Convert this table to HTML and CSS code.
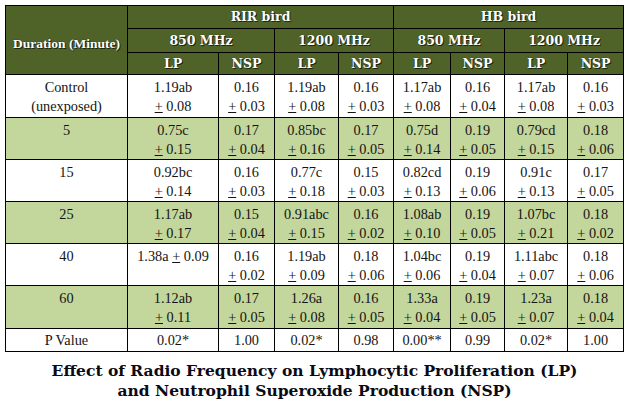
FILE: index.html
```html
<!DOCTYPE html>
<html>
<head>
<meta charset="utf-8">
<link rel="stylesheet" href="styles.css">
</head>
<body>
<div class="page">
<table class="data">
  <colgroup>
    <col class="c0"><col class="c1"><col class="c2"><col class="c3"><col class="c4"><col class="c5"><col class="c6"><col class="c7"><col class="c8">
  </colgroup>
  <thead>
    <tr class="hr1">
      <th rowspan="3" class="dur">Duration (Minute)</th>
      <th colspan="4">RIR bird</th>
      <th colspan="4">HB bird</th>
    </tr>
    <tr class="hr2">
      <th colspan="2">850 MHz</th>
      <th colspan="2">1200 MHz</th>
      <th colspan="2">850 MHz</th>
      <th colspan="2">1200 MHz</th>
    </tr>
    <tr class="hr3">
      <th>LP</th><th>NSP</th><th>LP</th><th>NSP</th><th>LP</th><th>NSP</th><th>LP</th><th>NSP</th>
    </tr>
  </thead>
  <tbody>
    <tr class="r w ra">
      <td>Control<br>(unexposed)</td>
      <td>1.19ab<br><u>+</u> 0.08</td><td>0.16<br><u>+</u> 0.03</td>
      <td>1.19ab<br><u>+</u> 0.08</td><td>0.16<br><u>+</u> 0.03</td>
      <td>1.17ab<br><u>+</u> 0.08</td><td>0.16<br><u>+</u> 0.04</td>
      <td>1.17ab<br><u>+</u> 0.08</td><td>0.16<br><u>+</u> 0.03</td>
    </tr>
    <tr class="r g rb">
      <td>5</td>
      <td>0.75c<br><u>+</u> 0.15</td><td>0.17<br><u>+</u> 0.04</td>
      <td>0.85bc<br><u>+</u> 0.16</td><td>0.17<br><u>+</u> 0.05</td>
      <td>0.75d<br><u>+</u> 0.14</td><td>0.19<br><u>+</u> 0.05</td>
      <td>0.79cd<br><u>+</u> 0.15</td><td>0.18<br><u>+</u> 0.06</td>
    </tr>
    <tr class="r w rb">
      <td>15</td>
      <td>0.92bc<br><u>+</u> 0.14</td><td>0.16<br><u>+</u> 0.03</td>
      <td>0.77c<br><u>+</u> 0.18</td><td>0.15<br><u>+</u> 0.03</td>
      <td>0.82cd<br><u>+</u> 0.13</td><td>0.19<br><u>+</u> 0.06</td>
      <td>0.91c<br><u>+</u> 0.13</td><td>0.17<br><u>+</u> 0.05</td>
    </tr>
    <tr class="r g rc">
      <td>25</td>
      <td>1.17ab<br><u>+</u> 0.17</td><td>0.15<br><u>+</u> 0.04</td>
      <td>0.91abc<br><u>+</u> 0.15</td><td>0.16<br><u>+</u> 0.02</td>
      <td>1.08ab<br><u>+</u> 0.10</td><td>0.19<br><u>+</u> 0.05</td>
      <td>1.07bc<br><u>+</u> 0.21</td><td>0.18<br><u>+</u> 0.02</td>
    </tr>
    <tr class="r w rb">
      <td>40</td>
      <td>1.38a <u>+</u> 0.09</td><td>0.16<br><u>+</u> 0.02</td>
      <td>1.19ab<br><u>+</u> 0.09</td><td>0.18<br><u>+</u> 0.06</td>
      <td>1.04bc<br><u>+</u> 0.06</td><td>0.19<br><u>+</u> 0.04</td>
      <td>1.11abc<br><u>+</u> 0.07</td><td>0.18<br><u>+</u> 0.06</td>
    </tr>
    <tr class="r g ra">
      <td>60</td>
      <td>1.12ab<br><u>+</u> 0.11</td><td>0.17<br><u>+</u> 0.05</td>
      <td>1.26a<br><u>+</u> 0.08</td><td>0.16<br><u>+</u> 0.05</td>
      <td>1.33a<br><u>+</u> 0.04</td><td>0.19<br><u>+</u> 0.05</td>
      <td>1.23a<br><u>+</u> 0.07</td><td>0.18<br><u>+</u> 0.04</td>
    </tr>
    <tr class="pv w">
      <td class="pl">P Value</td>
      <td>0.02*</td><td>1.00</td><td>0.02*</td><td>0.98</td><td>0.00**</td><td>0.99</td><td>0.02*</td><td>1.00</td>
    </tr>
  </tbody>
</table>
<div class="caption">Effect of Radio Frequency on Lymphocytic Proliferation (LP)<br>and Neutrophil Superoxide Production (NSP)</div>
</div>
</body>
</html>
```

FILE: styles.css
```css
html, body {
  margin: 0;
  padding: 0;
  background: #ffffff;
}
.page {
  padding: 5px 0 0 5px;
  width: 624px;
}
.data {
  border-collapse: collapse;
  table-layout: fixed;
  width: 619px;
  font-family: "Liberation Serif", "Times New Roman", serif;
  color: #141414;
}
.c0 { width: 122px; }
.c1 { width: 91px; }
.c2 { width: 56px; }
.c3 { width: 64px; }
.c4 { width: 55px; }
.c5 { width: 57px; }
.c6 { width: 54px; }
.c7 { width: 63px; }
.c8 { width: 56px; }
.data th, .data td {
  border: 1px solid #000;
  padding: 0;
  text-align: center;
  white-space: nowrap;
  overflow: hidden;
}
.data th {
  background: #4f6228;
  color: #ffffff;
  font-family: "DejaVu Serif", "Liberation Serif", serif;
  font-weight: bold;
  font-size: 12.5px;
  line-height: 18px;
  text-shadow: 1px 1px 0 #1d2510, 0 0 1px #1d2510;
}
.data th.dur {
  font-family: "Liberation Serif", "Times New Roman", serif;
  font-size: 13.5px;
  padding-top: 7px;
}
.hr1 th { height: 22px; }
.hr2 th { height: 23px; }
.hr3 th { height: 21px; }
.data td {
  font-size: 14.3px;
  line-height: 19px;
  vertical-align: top;
  padding-top: 3px;
}
.r.ra td { height: 39px; }
.r.rb td { height: 38px; }
.r.rc td { height: 37px; }
.w td { background: #ffffff; }
.g td { background: #c3d69b; }
.pv td {
  height: 22px;
  vertical-align: middle;
  padding-top: 0;
}
.data u {
  text-decoration: underline;
  text-underline-offset: 1px;
}
.caption {
  margin-top: 9px;
  width: 619px;
  text-align: center;
  font-family: "DejaVu Serif", "Liberation Serif", serif;
  font-weight: bold;
  font-size: 15.5px;
  line-height: 20px;
  color: #0a0a14;
}
```
